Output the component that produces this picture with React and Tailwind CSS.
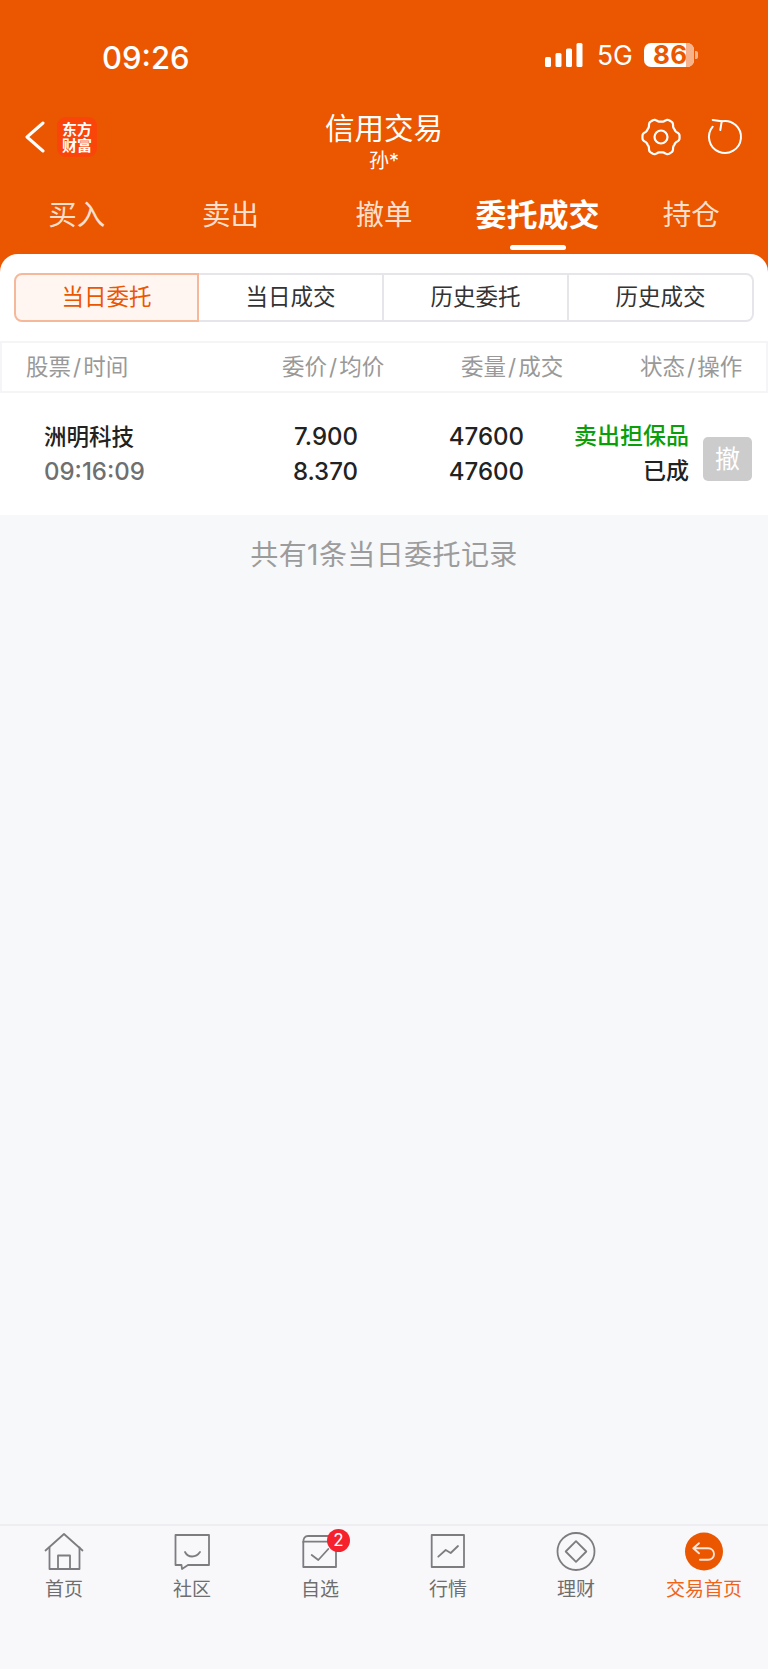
import React from "react";

function gearPath() {
  const pts = [];
  const n = 144;
  for (let i = 0; i < n; i++) {
    const t = (i / n) * Math.PI * 2;
    const r = 17 + 1.8 * (Math.cos(6 * t) - 0.14 * Math.cos(18 * t));
    pts.push((20 + r * Math.cos(t)).toFixed(2) + " " + (20 + r * Math.sin(t)).toFixed(2));
  }
  return "M" + pts.join("L") + "z";
}

const Gear = () => (
  <svg width="40" height="40" viewBox="0 0 40 40" fill="none" stroke="#fff" strokeWidth="2.200" strokeLinejoin="round">
    <path d={gearPath()} />
    <circle cx="20" cy="20" r="6.500" />
  </svg>
);

const Refresh = () => (
  <svg width="40" height="40" viewBox="0 0 40 40" fill="none" stroke="#fff" strokeWidth="2" strokeLinecap="round" strokeLinejoin="round">
    <path d="M16.700 4.300A16 16 0 1 1 7.700 9.700" />
    <path d="M7.700 3L16.700 4.300 15.300 13" />
  </svg>
);

const Signal = () => (
  <svg width="38" height="24" viewBox="0 0 38 24" fill="#fff">
    <rect x="0" y="14" width="6" height="10" rx="1.500" />
    <rect x="10.500" y="10" width="6" height="14" rx="1.500" />
    <rect x="21" y="5.500" width="6" height="18.500" rx="1.500" />
    <rect x="31.500" y="0" width="6" height="24" rx="1.500" />
  </svg>
);

const HomeIcon = () => (
  <svg width="40" height="40" viewBox="0 0 40 40" fill="none" stroke="#7d7d80" strokeWidth="1.800" strokeLinejoin="round" strokeLinecap="round">
    <path d="M1.500 19.500L20 3l18.500 16.500" />
    <path d="M5.500 16.500V38h30V16.500" />
    <path d="M14 38V24.500h12V38" />
  </svg>
);

const ChatIcon = () => (
  <svg width="40" height="40" viewBox="0 0 40 40" fill="none" stroke="#7d7d80" strokeWidth="1.800" strokeLinejoin="round" strokeLinecap="round">
    <path d="M3.500 4h33.500v30H16l-6 4-.5-4H3.500z" />
    <path d="M13 21c3 6 11 6 15 0" />
  </svg>
);

const CalIcon = () => (
  <svg width="40" height="40" viewBox="0 0 40 40" fill="none" stroke="#7d7d80" strokeWidth="1.800" strokeLinejoin="round" strokeLinecap="round">
    <path d="M3.300 11C3.300 7 5 5 8 5h26" />
    <path d="M3.300 10.700H36V36H3.300z" />
    <path d="M11.700 24l6.600 5 10-11" />
  </svg>
);

const ChartIcon = () => (
  <svg width="40" height="40" viewBox="0 0 40 40" fill="none" stroke="#7d7d80" strokeWidth="1.800" strokeLinejoin="round" strokeLinecap="round">
    <path d="M3.700 4H36v32H3.700z" />
    <path d="M10.300 25.700L17.700 19l5 3 7.300-7" />
  </svg>
);

const WealthIcon = () => (
  <svg width="40" height="40" viewBox="0 0 40 40" fill="none" stroke="#7d7d80" strokeWidth="1.800" strokeLinejoin="round">
    <circle cx="20" cy="20.500" r="18.500" />
    <path d="M20 10.200L30.300 20.500 20 30.800 9.700 20.500z" />
  </svg>
);

const TradeIcon = () => (
  <svg width="40" height="40" viewBox="0 0 40 40" fill="none">
    <circle cx="20" cy="20.500" r="19" fill="#eb5600" />
    <path d="M15 12.300L9.300 17.300l5.700 5M9.300 17.300H24c3.500 0 6 2.500 6 5.700s-2.500 5.700-6 5.700h-8" stroke="#fde6d8" strokeWidth="1.900" strokeLinecap="round" strokeLinejoin="round" />
  </svg>
);

const tabs = [
  ["买入", false],
  ["卖出", false],
  ["撤单", false],
  ["委托成交", true],
  ["持仓", false],
];

const subTabs = ["当日成交", "历史委托", "历史成交"];

const navItems = [
  ["首页", <HomeIcon />],
  ["社区", <ChatIcon />],
  ["自选", <CalIcon />],
  ["行情", <ChartIcon />],
  ["理财", <WealthIcon />],
];

export default function App() {
  return (
    <div className="w-[768px] h-[1669px] flex flex-col bg-[#f7f8fa] font-['Inter','Noto_Sans_CJK_SC',sans-serif] overflow-hidden">
      <div className="bg-[#eb5600] text-white">
        <div className="h-[100px] pt-[35px] flex items-start">
          <div className="h-[44px] flex items-center pl-[102px] text-[31px] leading-none font-medium w-[545px]">09:26</div>
          <div className="h-[44px] flex items-center -mt-[2px]">
            <Signal />
            <span className="ml-[14px] text-[26.5px] leading-none">5G</span>
            <div className="ml-[11px] w-[50px] h-[24px] rounded-[7px] bg-white text-[#eb5600] text-[26px] font-bold leading-none flex items-center pl-[9px] tracking-[0.5px]">86</div>
            <div className="-ml-[8px] w-[8px] h-[24px] rounded-r-[7px] bg-[#f7b48c]"></div>
            <div className="ml-[1px] w-[3px] h-[8px] rounded-r-[2px] bg-[#f7b48c]"></div>
          </div>
        </div>

        <div className="h-[84px] flex items-start">
          <div className="w-[200px] h-[74px] flex items-center pl-[25px]">
            <svg width="20" height="32" viewBox="0 0 20 32" fill="none" stroke="#fff" strokeWidth="3" strokeLinecap="round" strokeLinejoin="round">
              <path d="M18 2L2 16l16 14" />
            </svg>
            <div className="ml-[12px] w-[40px] h-[40px] rounded-[9px] bg-[#f9440a] text-center text-[15px] leading-[16px] pt-[4px] font-bold font-['Noto_Sans_CJK_SC',serif]">
              东方<br />财富
            </div>
          </div>
          <div className="flex-1 flex flex-col items-center pt-[1px]">
            <span className="text-[29.5px] leading-[54px]">信用交易</span>
            <span className="text-[20px] leading-[26px] -mt-[7px]">孙*</span>
          </div>
          <div className="w-[200px] h-[74px] flex items-center justify-end pr-[23px] gap-[24px]">
            <Gear />
            <Refresh />
          </div>
        </div>

        <div className="grid grid-cols-5 h-[70px]">
          {tabs.map(([label, active]) => (
            <div key={label} className="flex flex-col items-center">
              <span className={active ? "text-[31px] leading-[61px] font-bold text-white" : "text-[28.5px] leading-[61px] text-[#fcdfcc]"}>{label}</span>
              {active && <div className="w-[56px] h-[5px] rounded-full bg-white"></div>}
            </div>
          ))}
        </div>

        <div className="bg-white rounded-t-[18px] px-[14px] pt-[19px] pb-[19px]">
          <div className="flex h-[49px] w-[740px] text-[22.5px] leading-none">
            <div className="w-[185px] rounded-l-[8px] border-2 border-[#f6b89a] bg-[#fff6f2] text-[#eb5600] flex items-center justify-center">当日委托</div>
            {subTabs.map((label, i) => (
              <div key={label} className={"w-[185px] border-y-2 border-r-2 border-[#e6e6ea] text-[#333] flex items-center justify-center " + (i === 2 ? "rounded-r-[8px]" : "")}>{label}</div>
            ))}
          </div>
        </div>
      </div>

      <div className="h-[52px] bg-white border-2 border-[#f5f5f7] flex items-center text-[22.5px] text-[#999] leading-none">
        <div className="w-[258px] pl-[24px]">股票<span className="mx-[2px]">/</span>时间</div>
        <div className="w-[179px] pl-[22px]">委价<span className="mx-[2px]">/</span>均价</div>
        <div className="w-[179px] pl-[22px]">委量<span className="mx-[2px]">/</span>成交</div>
        <div className="pl-[22px]">状态<span className="mx-[2px]">/</span>操作</div>
      </div>

      <div className="h-[122px] bg-white flex items-center text-[#222] text-[24px] leading-[35px] font-medium">
        <div className="w-[260px] pl-[44px]">
          <div className="text-[22.5px]">洲明科技</div>
          <div className="text-[#6f6f6f] text-[24px]">09:16:09</div>
        </div>
        <div className="w-[98px] text-right">
          <div>7.900</div>
          <div>8.370</div>
        </div>
        <div className="w-[166px] text-right">
          <div>47600</div>
          <div>47600</div>
        </div>
        <div className="w-[165px] text-right text-[23px]">
          <div className="text-[#0a9f0a]">卖出担保品</div>
          <div>已成</div>
        </div>
        <div className="ml-[14px] mt-[10px] w-[49px] h-[44px] rounded-[5px] bg-[#cccccc] text-white text-[25px] font-normal leading-none flex items-center justify-center">撤</div>
      </div>

      <div className="flex-1 flex justify-center pt-[22px] text-[28px] leading-[36px] tracking-[0.4px] text-[#9c9c9c]">共有1条当日委托记录</div>

      <div className="h-[145px] bg-[#f8f8fb] border-t-2 border-[#eeeef2] grid grid-cols-6 pt-[5px]">
        {navItems.map(([label, icon]) => (
          <div key={label} className="flex flex-col items-center">
            <div className="relative w-[40px] h-[40px]">
              {icon}
              {label === "自选" && (
                <div className="absolute -top-[2px] left-[27px] w-[23px] h-[23px] rounded-full bg-[#f5222d] text-white text-[17px] leading-none flex items-center justify-center">2</div>
              )}
            </div>
            <span className="mt-[5px] text-[19px] leading-[28px] text-[#6e6e6e]">{label}</span>
          </div>
        ))}
        <div className="flex flex-col items-center">
          <TradeIcon />
          <span className="mt-[5px] text-[19px] leading-[28px] text-[#f0641a]">交易首页</span>
        </div>
      </div>
    </div>
  );
}
